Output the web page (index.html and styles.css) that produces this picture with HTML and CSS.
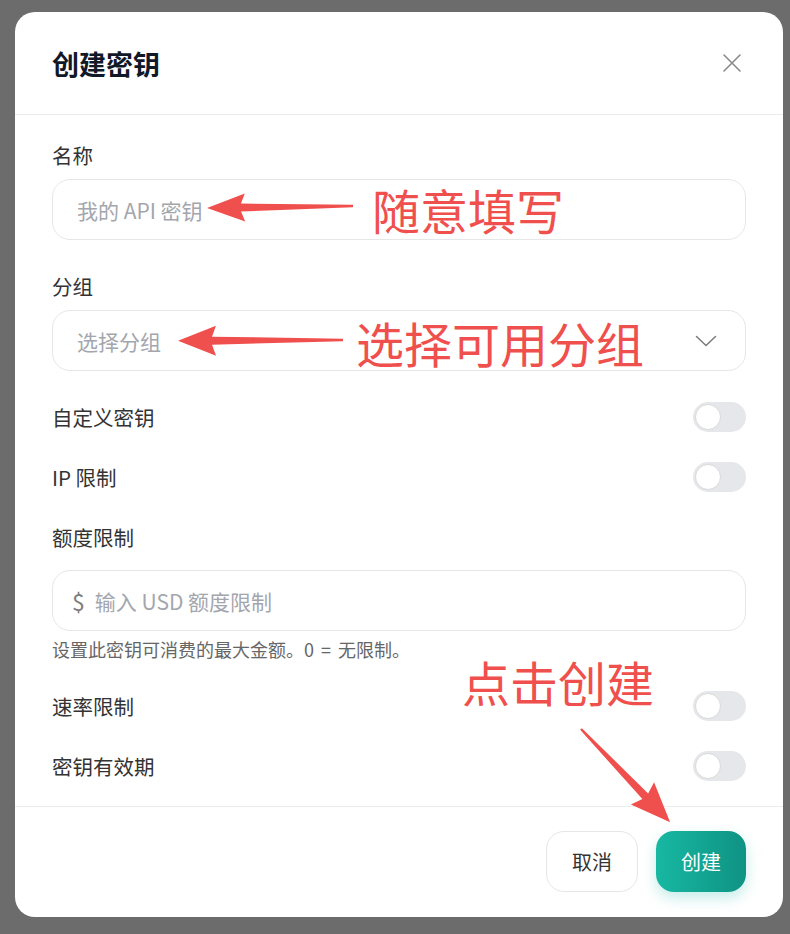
FILE: index.html
```html
<!DOCTYPE html>
<html lang="zh-CN">
	<head>
		<meta charset="utf-8">
		<title>创建密钥</title>
		<link rel="stylesheet" href="styles.css">
	</head>
	<body>
		<div class="backdrop">
			<div class="modal">
				<div class="modal-header">
					<h3 class="modal-title">创建密钥</h3>
					<button class="close-btn" aria-label="关闭">
						<svg width="20" height="20" viewBox="0 0 20 20"><path d="M2 2 L18 18 M18 2 L2 18" stroke="#8a8a8a" stroke-width="1.6" fill="none" stroke-linecap="round"/></svg>
					</button>
				</div>
				<div class="modal-body">
					<label class="field-label">名称</label>
					<div class="input-box"><span class="placeholder">我的 API 密钥</span></div>

					<label class="field-label gap-lg">分组</label>
					<div class="input-box select-box">
						<span class="placeholder">选择分组</span>
						<svg width="22" height="12" viewBox="0 0 22 12"><path d="M1.5 1.5 L11 10.5 L20.5 1.5" stroke="#7a7a7a" stroke-width="1.5" fill="none" stroke-linecap="round" stroke-linejoin="round"/></svg>
					</div>

					<div class="switch-row first">
						<span>自定义密钥</span>
						<span class="switch"><span class="knob"></span></span>
					</div>
					<div class="switch-row">
						<span>IP 限制</span>
						<span class="switch"><span class="knob"></span></span>
					</div>

					<label class="field-label quota-label">额度限制</label>
					<div class="input-box">
						<span class="dollar">$</span>
						<span class="placeholder">输入 USD 额度限制</span>
					</div>
					<p class="help">设置此密钥可消费的最大金额。0 = 无限制。</p>

					<div class="switch-row">
						<span>速率限制</span>
						<span class="switch"><span class="knob"></span></span>
					</div>
					<div class="switch-row">
						<span>密钥有效期</span>
						<span class="switch"><span class="knob"></span></span>
					</div>
				</div>
				<div class="modal-footer">
					<button class="btn btn-cancel">取消</button>
					<button class="btn btn-primary">创建</button>
				</div>
			</div>
		</div>

		<!-- red annotation marks drawn over the screenshot -->
		<svg class="marks" width="790" height="934" viewBox="0 0 790 934">
			<g fill="#f0504d">
				<polygon transform="translate(353 206) rotate(179.2)" points="0,-1.3 112,-4 108,-14 146,0 108,14 112,4 0,1.3"/>
				<polygon transform="translate(343 340) rotate(179.7)" points="0,-1.3 131,-4 127,-15 165,0 127,15 131,4 0,1.3"/>
				<polygon transform="translate(581 729) rotate(46.3)" points="0,-1.2 93,-4 89,-16 129,0 89,16 93,4 0,1.2"/>
			</g>
		</svg>
		<span class="note note-name">随意填写</span>
		<span class="note note-group">选择可用分组</span>
		<span class="note note-create">点击创建</span>
	</body>
</html>
```

FILE: styles.css
```css
body {
	margin: 0;
	background: #6c6c6c;
	font-family: "Noto Sans CJK SC", "Noto Sans", sans-serif;
	overflow: hidden;
}

.backdrop {
	padding: 12px 7px 17px 15px;
	display: flex;
}

.modal {
	width: 768px;
	height: 905px;
	background: #fff;
	border-radius: 20px;
	display: flex;
	flex-direction: column;
	overflow: hidden;
}

.modal-header {
	height: 103px;
	padding: 0 41px 0 37px;
	display: flex;
	align-items: center;
	justify-content: space-between;
	border-bottom: 1px solid #ececec;
	box-sizing: border-box;
}

.modal-title {
	margin: 0;
	font-size: 27px;
	font-weight: 700;
	color: #111827;
	line-height: 34px;
	padding-top: 2px;
}

.close-btn {
	background: none;
	border: none;
	padding: 0;
	width: 20px;
	height: 20px;
	cursor: pointer;
}

.modal-body {
	padding: 27px 37px 25px 37px;
	display: flex;
	flex-direction: column;
	border-bottom: 1px solid #ececec;
	color: #333;
	font-size: 20.5px;
}

.field-label {
	line-height: 26px;
	margin-bottom: 11px;
	color: #333;
}

.field-label.gap-lg {
	margin-top: 33px;
}

.field-label.quota-label {
	margin-top: 32px;
	margin-bottom: 20px;
}

.input-box {
	height: 61px;
	border: 1px solid #e6e6e6;
	border-radius: 18px;
	box-sizing: border-box;
	display: flex;
	align-items: center;
	padding: 0 24px;
	gap: 9px;
}

.input-box .dollar {
	color: #7d7d7d;
	font-size: 23px;
	margin-left: -5px;
	margin-right: 1px;
}

.placeholder {
	color: #a3a6ad;
	font-size: 21px;
}

.select-box {
	justify-content: space-between;
	padding-right: 28px;
}

.switch-row {
	display: flex;
	align-items: center;
	justify-content: space-between;
	height: 30px;
	margin-top: 30px;
	line-height: 26px;
}

.switch-row.first {
	margin-top: 31px;
}

.switch {
	width: 53px;
	height: 30px;
	border-radius: 15px;
	background: #e6e7ea;
	display: flex;
	align-items: center;
	padding-left: 2px;
	box-sizing: border-box;
}

.knob {
	width: 24px;
	height: 24px;
	border-radius: 50%;
	background: #fff;
	border: 1.5px solid #d9d9d9;
}

.help {
	margin: 6px 0 0 0;
	font-size: 18px;
	line-height: 24px;
	color: #666;
	word-spacing: 3px;
}

.modal-footer {
	padding: 24px 37px 0 0;
	display: flex;
	justify-content: flex-end;
	gap: 18px;
}

.btn {
	height: 61px;
	border-radius: 18px;
	font-family: inherit;
	font-size: 20px;
	cursor: pointer;
}

.btn-cancel {
	width: 92px;
	background: #fff;
	border: 1px solid #e6e6e6;
	color: #333;
}

.btn-primary {
	width: 90px;
	border: none;
	color: #fff;
	background: linear-gradient(90deg, #17b8a2, #0f9283);
	box-shadow: 0 6px 14px rgba(20, 184, 166, 0.25);
}

.marks {
	position: absolute;
	left: 0;
	top: 0;
	pointer-events: none;
}

.note {
	position: absolute;
	color: #f0504d;
	font-size: 48px;
	line-height: 1;
	white-space: nowrap;
}

.note-name {
	left: 372px;
	top: 185px;
}

.note-group {
	left: 356px;
	top: 318px;
}

.note-create {
	left: 462px;
	top: 657px;
}
```
